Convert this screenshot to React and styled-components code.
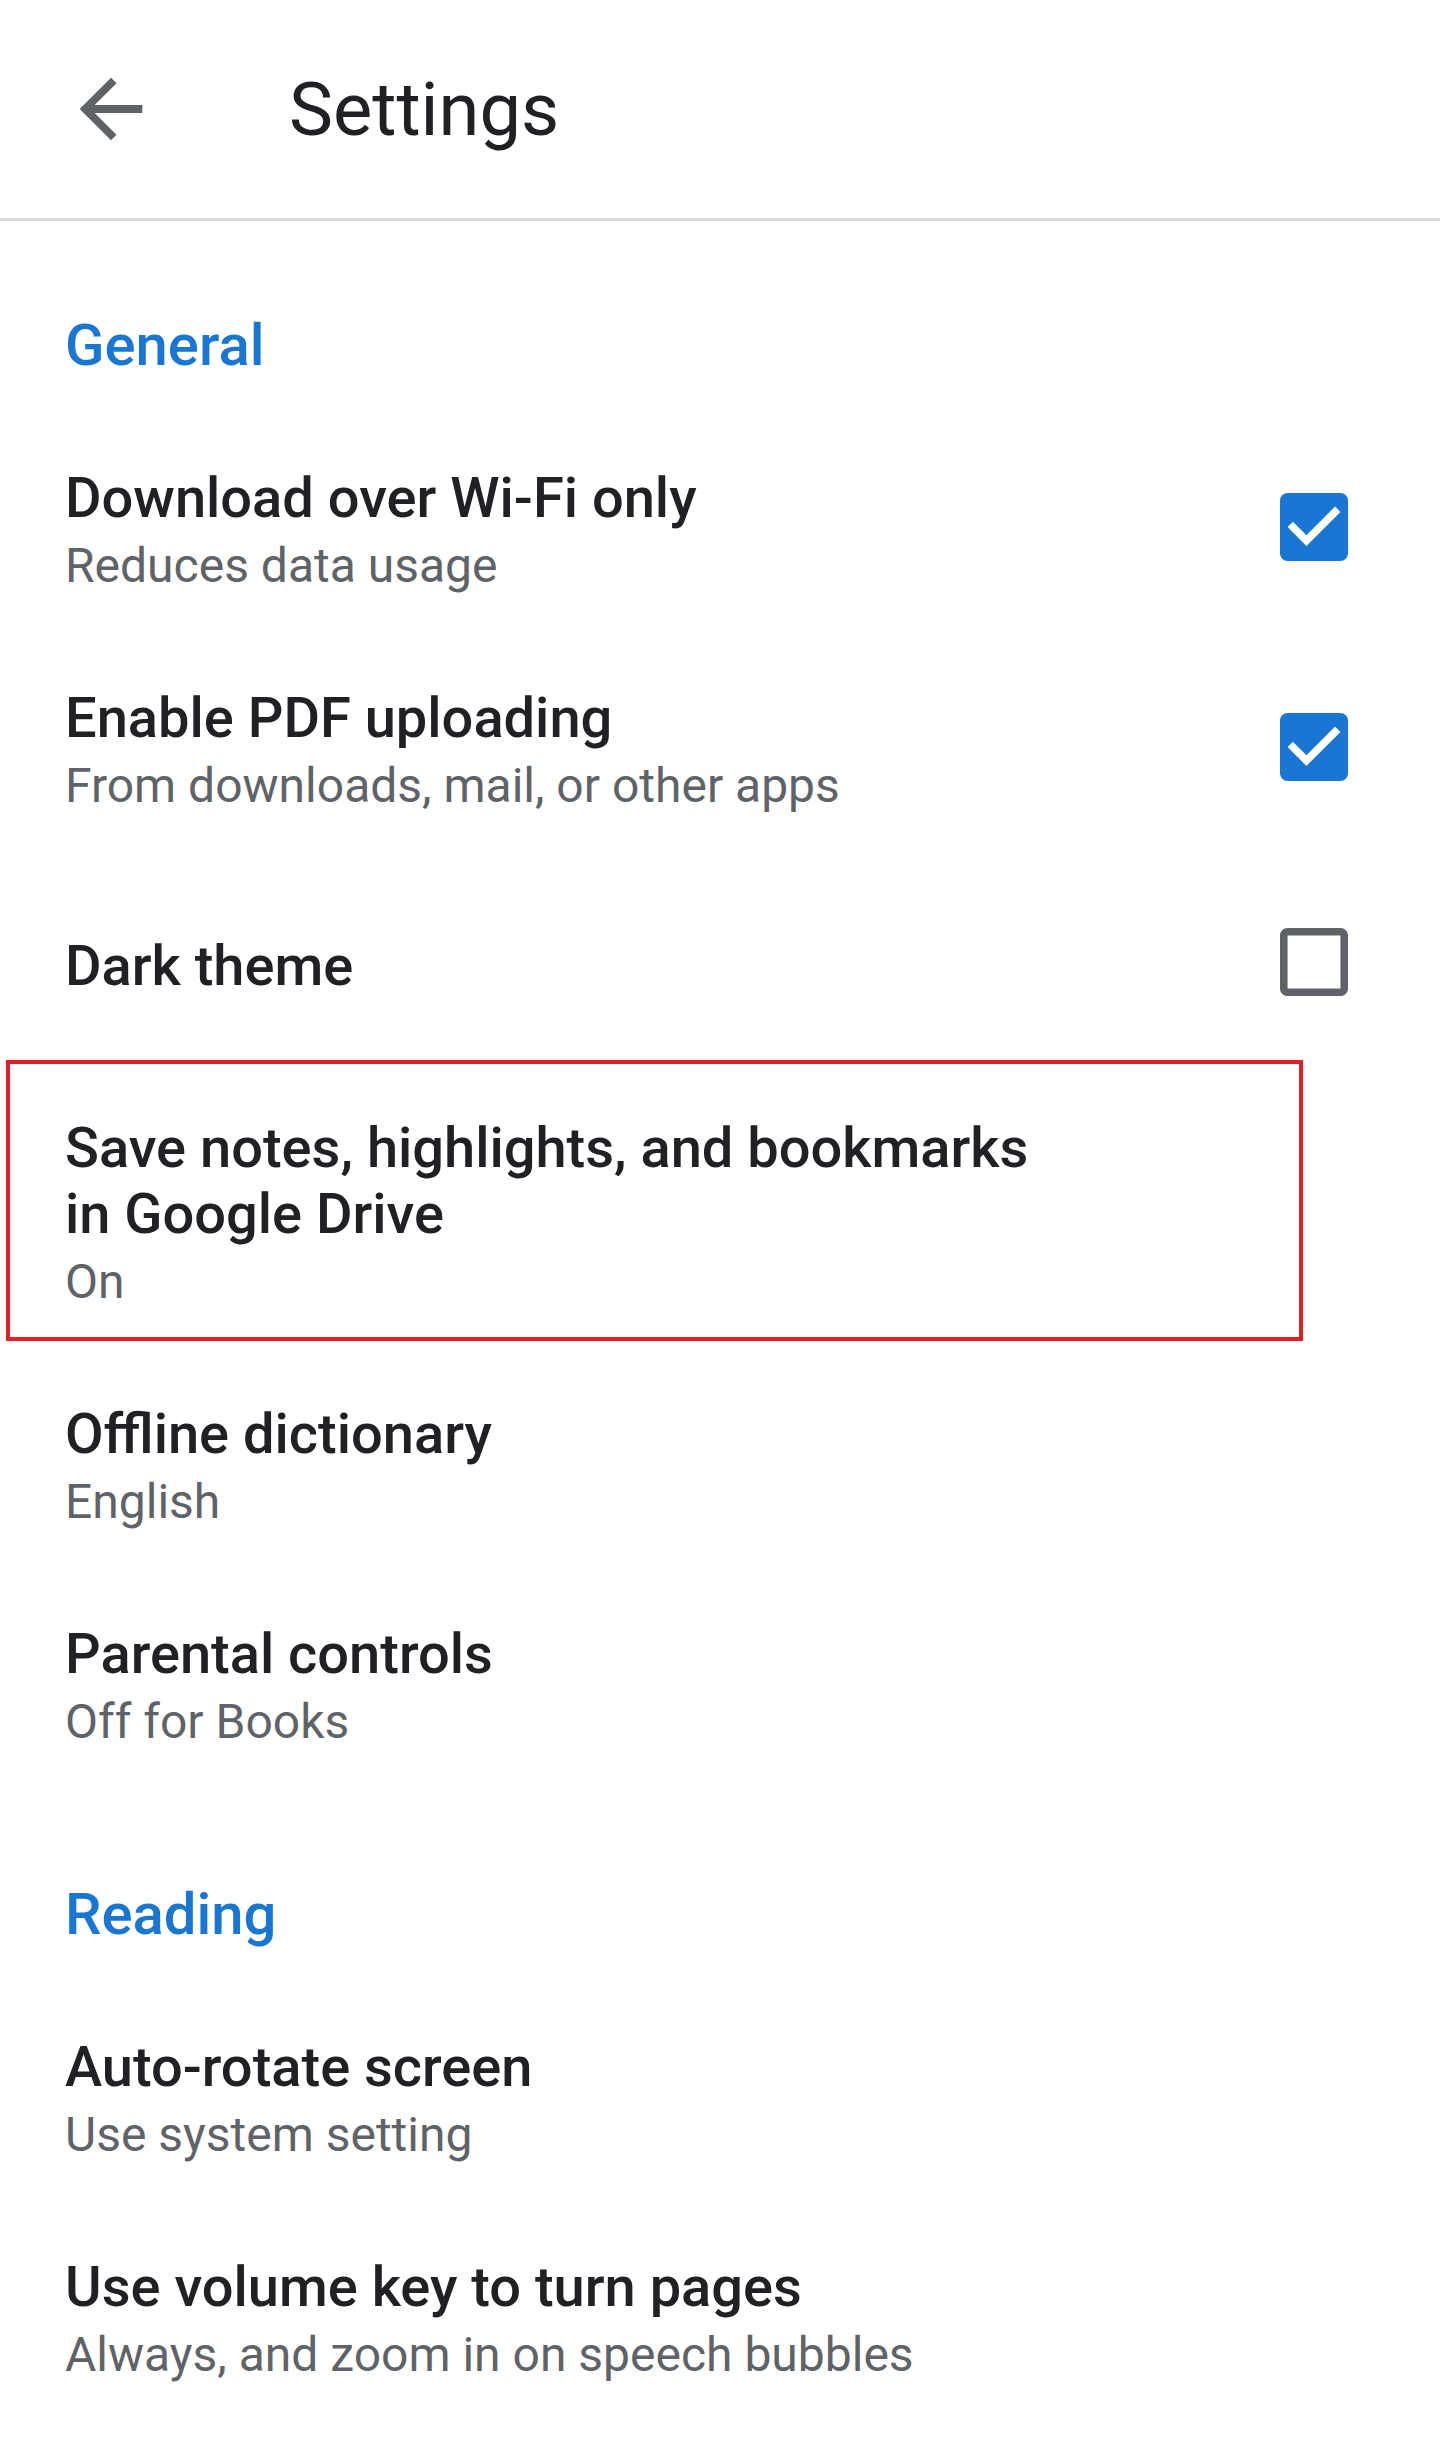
import React from 'react';
import styled, { createGlobalStyle } from 'styled-components';

const GlobalStyle = createGlobalStyle`
  body {
    margin: 0;
    background: #ffffff;
    font-family: Roboto, "Noto Sans", Arial, sans-serif;
  }
`;

const Page = styled.div`
  width: 1440px;
  min-height: 2463px;
  background: #ffffff;
`;

const TopBar = styled.header`
  display: flex;
  align-items: center;
  height: 218px;
  border-bottom: 3px solid #dadada;
`;

const BackButton = styled.button`
  display: flex;
  align-items: center;
  justify-content: center;
  margin-left: 64px;
  padding: 0;
  border: none;
  background: none;
  color: #5f6368;
  cursor: pointer;
`;

const Title = styled.h1`
  margin: 0 0 0 131px;
  font-size: 74px;
  font-weight: 400;
  color: #202124;
`;

const List = styled.main`
  padding: 0 92px 0 65px;
`;

const SectionTitle = styled.h2`
  margin: 0;
  padding: ${p => (p.$first ? '91px' : '85px')} 0 42px;
  font-size: 58px;
  line-height: 66px;
  font-weight: 500;
  color: #1976d2;
`;

const Row = styled.div`
  position: relative;
  display: flex;
  align-items: center;
  justify-content: space-between;
  min-height: ${p => (p.$single ? '211px' : '220px')};
  padding: 44px 0 43px;
  box-sizing: border-box;

  ${p => p.$marked && `
    &::after {
      content: '';
      position: absolute;
      left: -59px;
      right: 45px;
      top: -11px;
      bottom: 15px;
      border: 4px solid #e31e24;
      pointer-events: none;
    }
  `}
`;

const Texts = styled.div`
  display: flex;
  flex-direction: column;
`;

const RowTitle = styled.div`
  font-size: 56px;
  line-height: 66px;
  font-weight: 500;
  color: #202124;
`;

const RowSummary = styled.div`
  margin-top: 3px;
  font-size: 48px;
  line-height: 63px;
  font-weight: 400;
  color: #5f6368;
`;

const Box = styled.svg`
  flex: none;
  width: 68px;
  height: 68px;
  margin-top: -8px;
`;

const Checkbox = ({ checked }) =>
  checked ? (
    <Box viewBox="0 0 18 18">
      <rect x="0" y="0" width="18" height="18" rx="2" fill="#1976d2" />
      <path d="M7 14l-5-5 1.41-1.41L7 11.17l7.59-7.59L16 5l-9 9z" fill="#ffffff" />
    </Box>
  ) : (
    <Box viewBox="0 0 18 18">
      <path
        d="M16 2v14H2V2h14m0-2H2C.9 0 0 .9 0 2v14c0 1.1.9 2 2 2h14c1.1 0 2-.9 2-2V2c0-1.1-.9-2-2-2z"
        fill="#5f6368"
      />
    </Box>
  );

const BackArrow = () => (
  <svg width="94" height="94" viewBox="0 0 24 24">
    <path d="M20 11H7.83l5.59-5.59L12 4l-8 8 8 8 1.41-1.41L7.83 13H20v-2z" fill="currentColor" />
  </svg>
);

const Pref = ({ title, summary, checkbox, checked, single, marked }) => (
  <Row $single={single} $marked={marked}>
    <Texts>
      <RowTitle>{title}</RowTitle>
      {summary && <RowSummary>{summary}</RowSummary>}
    </Texts>
    {checkbox && <Checkbox checked={checked} />}
  </Row>
);

export default function App() {
  return (
    <Page>
      <GlobalStyle />
      <TopBar>
        <BackButton aria-label="Back">
          <BackArrow />
        </BackButton>
        <Title>Settings</Title>
      </TopBar>
      <List>
        <SectionTitle $first>General</SectionTitle>
        <Pref title="Download over Wi-Fi only" summary="Reduces data usage" checkbox checked />
        <Pref title="Enable PDF uploading" summary="From downloads, mail, or other apps" checkbox checked />
        <Pref title="Dark theme" checkbox single />
        <Pref
          marked
          title={<>Save notes, highlights, and bookmarks<br />in Google Drive</>}
          summary="On"
        />
        <Pref title="Offline dictionary" summary="English" />
        <Pref title="Parental controls" summary="Off for Books" />
        <SectionTitle>Reading</SectionTitle>
        <Pref title="Auto-rotate screen" summary="Use system setting" />
        <Pref title="Use volume key to turn pages" summary="Always, and zoom in on speech bubbles" />
      </List>
    </Page>
  );
}
